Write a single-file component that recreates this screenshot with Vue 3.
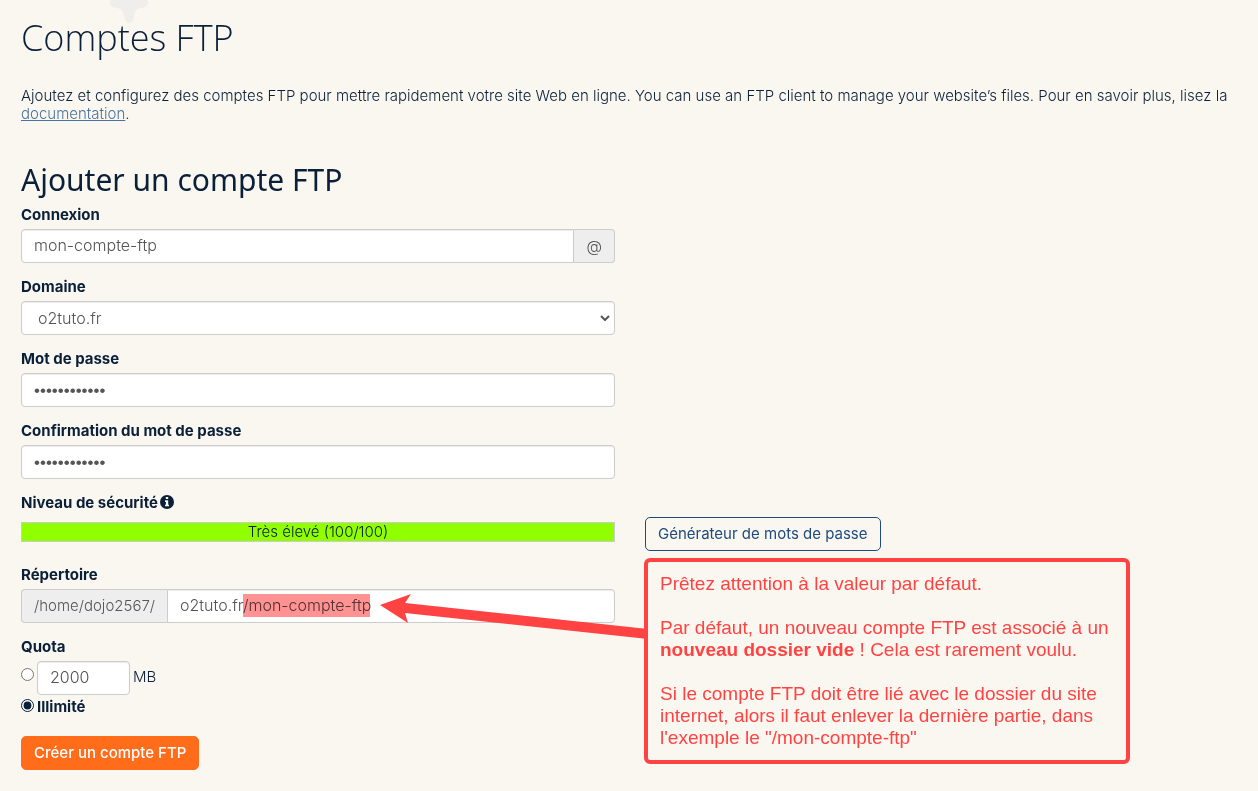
<script setup>
import { ref } from 'vue'

const login = ref('mon-compte-ftp')
const domain = ref('o2tuto.fr')
const password = ref('motdepasse12')
const confirmation = ref('motdepasse12')
const directory = ref('o2tuto.fr/mon-compte-ftp')
const quota = ref('unlimited')
const quotaSize = ref('2000')
</script>

<template>
  <main class="page">
    <svg class="ornament" viewBox="0 0 40 24" aria-hidden="true">
      <path d="M2 0C-1 4 3 8 8 8C13 9 14 11 15 16C16 21 17 23 20 23C23 23 24 21 25 16C26 11 27 9 32 8C37 8 41 4 38 0Z" />
    </svg>
    <h1>Comptes FTP</h1>
    <p class="intro">
      Ajoutez et configurez des comptes FTP pour mettre rapidement votre site Web en ligne. You can use an FTP client to manage your website’s files. Pour en savoir plus, lisez la
      <a href="#documentation">documentation</a>.
    </p>

    <h2>Ajouter un compte FTP</h2>
    <form class="form" @submit.prevent>
      <div class="field">
        <label for="login">Connexion</label>
        <div class="group">
          <input id="login" v-model="login" class="control" type="text" />
          <span class="addon end">@</span>
        </div>
      </div>

      <div class="field">
        <label for="domain">Domaine</label>
        <div class="select-wrap">
          <select id="domain" v-model="domain" class="control">
            <option>o2tuto.fr</option>
          </select>
          <svg class="chevron" viewBox="0 0 10 6" aria-hidden="true"><path d="M1 1L5 5L9 1" /></svg>
        </div>
      </div>

      <div class="field">
        <label for="password">Mot de passe</label>
        <input id="password" v-model="password" class="control secret" type="password" />
      </div>

      <div class="field">
        <label for="confirmation">Confirmation du mot de passe</label>
        <input id="confirmation" v-model="confirmation" class="control secret" type="password" />
      </div>

      <div class="field strength-field">
        <span class="label">
          Niveau de sécurité
          <svg class="info" viewBox="0 0 14 14" aria-hidden="true">
            <circle cx="7" cy="7" r="7" />
            <path d="M5.8 2h2.4v2.1H5.8zM5 5.3h3.2v4.4H9v1.6H5V9.7h.9V6.9H5z" />
          </svg>
        </span>
        <div class="strength">Très élevé (100/100)</div>
      </div>
      <div class="generator">
        <button class="outline" type="button">Générateur de mots de passe</button>
        <aside class="callout">
          <svg class="arrow" viewBox="0 0 268 32" aria-hidden="true">
            <path d="M0 12L31 1L25 10L268 36V46L25 20L28 30Z" />
          </svg>
          <p>Prêtez attention à la valeur par défaut.</p>
          <p>Par défaut, un nouveau compte FTP est associé à un <strong>nouveau dossier vide</strong> ! Cela est rarement voulu.</p>
          <p>Si le compte FTP doit être lié avec le dossier du site internet, alors il faut enlever la dernière partie, dans l'exemple le "/mon-compte-ftp"</p>
        </aside>
      </div>

      <div class="field">
        <label for="directory">Répertoire</label>
        <div class="group">
          <span class="addon start">/home/dojo2567/</span>
          <div class="directory">
            <input id="directory" v-model="directory" class="control" type="text" />
            <span class="highlight"></span>
          </div>
        </div>
      </div>

      <fieldset>
        <legend>Quota</legend>
        <div class="option">
          <input v-model="quota" type="radio" name="quota" value="limited" aria-label="Quota en MB" />
          <input v-model="quotaSize" class="control size" type="text" aria-label="Taille du quota" />
          <span class="unit">MB</span>
        </div>
        <div class="option unlimited">
          <input id="unlimited" v-model="quota" type="radio" name="quota" value="unlimited" />
          <label for="unlimited">Illimité</label>
        </div>
      </fieldset>

      <div class="actions">
        <button class="primary" type="submit">Créer un compte FTP</button>
      </div>
    </form>
  </main>
</template>

<style>
body {
  margin: 0;
  background: #faf7f0;
}
</style>

<style scoped>
* {
  box-sizing: border-box;
}
.page {
  position: relative;
  padding: 17px 19px 21px 21px;
  color: #0a1f38;
  font: 300 15px/18px Inter, sans-serif;
}
.ornament {
  position: absolute;
  top: 0;
  left: 109px;
  width: 40px;
  height: 24px;
  fill: #efeeea;
}
h1 {
  position: relative;
  margin: 0 0 28px;
  font: 300 36px/42px "Open Sans", sans-serif;
}
.intro {
  margin: 0 0 37px;
}
.intro a {
  color: #4a73a0;
}
h2 {
  margin: 0 0 6px;
  font: 400 30px/40px "Noto Sans", sans-serif;
}
.form {
  display: grid;
  grid-template-columns: 1fr 1fr;
  column-gap: 30px;
  row-gap: 15px;
}
.field,
fieldset,
.actions {
  grid-column: 1;
}
label,
legend,
.label {
  display: block;
  padding: 0;
  font-weight: 700;
}
.field > label,
.label,
legend {
  margin-bottom: 5px;
}
.control {
  display: block;
  width: 100%;
  height: 34px;
  padding: 5px 12px 7px;
  border: 1px solid #ccc;
  border-radius: 4px;
  background: #fff;
  box-shadow: inset 0 1px 1px rgba(0, 0, 0, 0.08);
  color: #555;
  font: 300 16px/20px Inter, sans-serif;
}
.secret {
  padding: 7px 12px 5px;
  font: 17px/20px "Liberation Sans", sans-serif;
}
.group {
  display: flex;
}
.addon {
  padding: 7px 12px;
  border: 1px solid #ccc;
  background: #eee;
  color: #555;
}
.addon.start {
  border-right: 0;
  border-radius: 4px 0 0 4px;
}
.addon.end {
  border-left: 0;
  border-radius: 0 4px 4px 0;
  font-size: 16px;
}
.group > .control {
  flex: 1;
  border-radius: 4px 0 0 4px;
}
.select-wrap,
.directory {
  position: relative;
  flex: 1;
}
select.control {
  padding: 0 16px;
  appearance: none;
}
.chevron {
  position: absolute;
  top: 14px;
  right: 5px;
  width: 10px;
  height: 6px;
  fill: none;
  stroke: #555;
  stroke-width: 2;
  pointer-events: none;
}
.directory .control {
  border-radius: 0 4px 4px 0;
}
.highlight {
  position: absolute;
  top: 5px;
  left: 76px;
  width: 127px;
  height: 23px;
  background: rgba(255, 67, 67, 0.58);
  mix-blend-mode: multiply;
  pointer-events: none;
}
.label {
  display: flex;
  gap: 2px;
}
.info {
  width: 14px;
  height: 14px;
  margin-top: 1px;
  fill: #0a1f38;
}
.info path {
  fill: #faf7f0;
}
.strength {
  height: 20px;
  margin: 10px 0 9px;
  border: 1px solid #ccc;
  background: #90ff00;
  text-align: center;
}
.generator {
  position: relative;
  padding-top: 23px;
}
button {
  height: 34px;
  padding: 0 12px;
  border-radius: 5px;
  font: 400 15px/18px Inter, sans-serif;
}
.outline {
  border: 1px solid #1e4a7d;
  background: transparent;
  color: #1e4a7d;
}
.primary {
  border: 1px solid #ff6c1a;
  background: #ff6c1a;
  color: #fff;
  font-weight: 500;
}
.callout {
  position: absolute;
  z-index: 1;
  top: 64px;
  left: -1px;
  width: 486px;
  padding: 11px 12px;
  border: 4px solid #ff4343;
  border-radius: 6px;
  color: #ff4343;
  font: 400 19px/22px "Liberation Sans", sans-serif;
}
.callout p {
  margin: 0 0 22px;
}
.callout p:last-child {
  margin: 0;
}
.arrow {
  position: absolute;
  top: 31px;
  left: -268px;
  width: 268px;
  height: 32px;
  overflow: visible;
  fill: #ff4343;
}
fieldset {
  margin: 0;
  padding: 0;
  border: 0;
}
.option {
  display: flex;
  gap: 3px;
}
input[type='radio'] {
  width: 13px;
  height: 13px;
  margin: 7px 0 0;
  accent-color: #0a1f38;
}
.control.size {
  width: 93px;
}
.unit {
  padding-top: 7px;
}
.unlimited {
  margin-top: 3px;
}
.unlimited input[type='radio'] {
  margin-top: 1px;
}
.actions {
  margin-top: 5px;
}
</style>
